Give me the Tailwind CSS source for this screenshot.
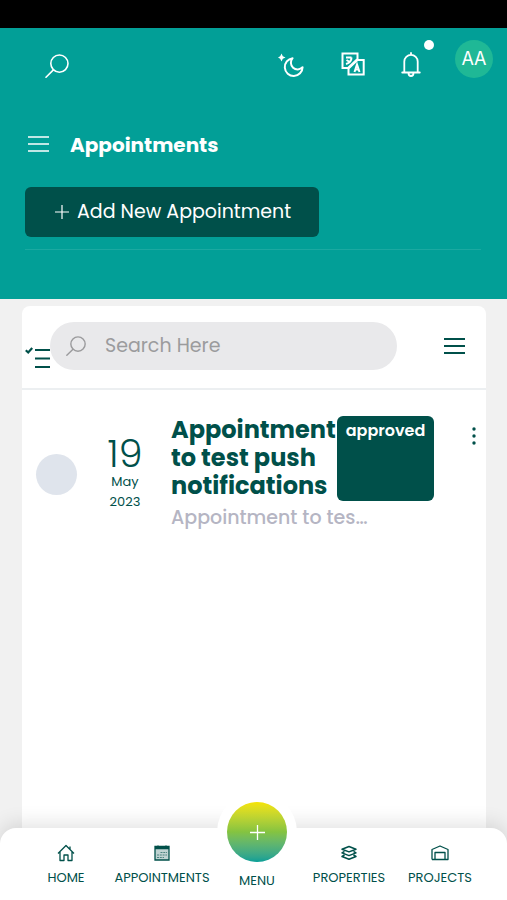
<!DOCTYPE html>
<html lang="en">
<head>
<meta charset="utf-8">
<meta name="viewport" content="width=device-width, initial-scale=1">
<title>Appointments</title>
<script src="https://cdn.jsdelivr.net/npm/@tailwindcss/browser@4"></script>
</head>
<body class="flex min-h-screen flex-col bg-[#f1f1f1] font-[Poppins,Inter,sans-serif] text-[#00504a]">
<div class="h-7 bg-black"></div>
<header class="h-[271px] bg-[#029f97] pl-[25px] pr-[14px] text-white">
  <div class="flex h-[90px] items-start justify-between pt-3">
    <button aria-label="Search" class="ml-5 mt-[14px]">
      <svg class="size-6" viewBox="0 0 24 24" fill="none" stroke="currentColor" stroke-width="1.6" stroke-linecap="round"><circle cx="14.4" cy="9.6" r="8.6"/><path d="M8.4 15.9 1 23.2"/></svg>
    </button>
    <div class="flex items-start">
      <button aria-label="Dark mode" class="mr-[37px] mt-3">
        <svg class="h-[26px] w-[26px]" viewBox="0 0 26 26" fill="none" stroke="currentColor" stroke-width="2" stroke-linejoin="round"><path d="M14.600 6.200A8.900 8.900 0 1 0 24.600 15.200 5.800 5.800 0 0 1 14.600 6.200Z"/><path d="M3.500 1.500 4.800 4.200 7.500 5.500 4.800 6.800 3.500 9.500 2.200 6.800 0 5.500 2.200 4.200Z" fill="currentColor" stroke="none"/></svg>
      </button>
      <button aria-label="Language" class="mr-[36px] mt-3">
        <svg class="size-6" viewBox="0 0 24 24" fill="none" stroke="currentColor" stroke-width="2"><path d="M7 16H1.500V1.500H16.500V7L7 16Z"/><path d="M7.500 16.500V22.500H22.700V8H16.500L7.500 16.500"/><path d="M5 5.500H10.500M5.500 8 9.500 10.500M10.500 5.500C10.500 8.500 8.500 11 5 12"/><path d="M13.500 20 16 12.500 18.500 20M14.500 17.500H18"/></svg>
      </button>
      <button aria-label="Notifications" class="relative mr-[34px] mt-3">
        <svg class="h-[26px] w-5" viewBox="0 0 20 26" fill="none" stroke="currentColor" stroke-width="1.8" stroke-linecap="round"><path d="M1.200 20.500H18.800M3.300 20V9.500A6.700 6.700 0 0 1 16.700 9.500V20M10 .9V2.500M7.500 21A2.500 3 0 0 0 12.500 21"/></svg>
        <span class="absolute -right-[13px] -top-3 size-[10px] rounded-full bg-white"></span>
      </button>
      <button class="size-[38px] rounded-full bg-[#1fb896] font-[Inter,sans-serif] text-lg font-normal">AA</button>
    </div>
  </div>
  <div class="flex h-[52px] items-center">
    <button aria-label="Open sidebar" class="ml-[3px] mr-[21px]">
      <svg class="h-[18px] w-[21px]" viewBox="0 0 21 18" fill="none" stroke="currentColor" stroke-width="1.600"><path d="M0 2H21M0 9H21M0 16H21"/></svg>
    </button>
    <h1 class="pt-[2px] text-xl font-bold">Appointments</h1>
  </div>
  <div class="mr-3 mt-[17px] border-b border-white/10 pb-3">
    <button class="flex h-[50px] items-center gap-2 rounded-md bg-[#00504a] pl-[30px] pr-7 text-[19px] whitespace-nowrap">
      <svg class="size-[14px]" viewBox="0 0 14 14" stroke="currentColor" stroke-width="1.200"><path d="M0 7H14M7 0V14"/></svg>
      Add New Appointment
    </button>
  </div>
</header>
<main class="ml-[22px] mr-[21px] mt-[7px] flex-1 rounded-t-lg bg-white">
  <div class="flex h-[84px] items-center border-b-2 border-[#eceff1] pb-[2px] pl-[3px] pr-[21px]">
    <button aria-label="Select items" class="mt-6">
      <svg class="h-6 w-[25px]" viewBox="0 0 25 24" fill="none" stroke="currentColor" stroke-width="2"><path d="M10 4H25M10 12.500H25M10 21H25"/><path d="M.8 4.200 3.200 6.500 7.200 2" stroke-width="2.200"/></svg>
    </button>
    <label class="mr-[47px] flex h-12 min-w-0 flex-1 items-center rounded-full bg-[#e9e9eb] px-4 text-[#9b9b9d]">
      <svg class="mr-[19px] size-5 shrink-0" viewBox="0 0 24 24" fill="none" stroke="currentColor" stroke-width="1.700" stroke-linecap="round"><circle cx="14.400" cy="9.600" r="8.600"/><path d="M8.400 15.900 1 23.200"/></svg>
      <input type="search" aria-label="Search" placeholder="Search Here" class="w-full min-w-0 bg-transparent pt-px text-[19px] outline-none placeholder:text-[#9b9b9d]">
    </label>
    <button aria-label="List options">
      <svg class="h-[18px] w-[21px]" viewBox="0 0 21 18" fill="none" stroke="currentColor" stroke-width="1.800"><path d="M0 2H21M0 9H21M0 16H21"/></svg>
    </button>
  </div>
  <article class="flex items-start pl-[14px] pr-[8px] pt-[26px]">
    <div class="mt-[38px] size-[41px] shrink-0 rounded-full bg-[#dfe4ec]"></div>
    <time datetime="2023-05-19" class="ml-6 mt-5 w-12 shrink-0 text-center text-[13px] leading-5">
      <span class="block text-[38px] font-light leading-9">19</span>May<br>2023
    </time>
    <div class="ml-[22px] w-[166px] shrink-0">
      <h2 class="text-2xl leading-7 font-bold">Appointment to test push notifications</h2>
      <p class="mt-1 w-[200px] whitespace-nowrap text-[19px] leading-7 font-medium text-[#b5b5c3]">Appointment to tes…</p>
    </div>
    <span class="h-[85px] w-[97px] shrink-0 rounded-md bg-[#00504a] pt-[5px] text-center text-base leading-5 font-semibold text-white">approved</span>
    <button aria-label="More actions" class="ml-auto mt-[11px]">
      <svg class="h-[18px] w-2" viewBox="0 0 8 18" fill="currentColor"><circle cx="4" cy="2" r="1.700"/><circle cx="4" cy="9" r="1.700"/><circle cx="4" cy="16" r="1.700"/></svg>
    </button>
  </article>
</main>
<nav class="sticky bottom-0 grid h-[72px] grid-cols-[86fr_106fr_84fr_100fr_82fr] rounded-t-2xl bg-white pl-[23px] pr-[26px] text-[13px] leading-5 shadow-[0_-4px_20px_rgba(0,0,0,0.12)]">
  <a href="#" class="flex flex-col items-center gap-[6px] pt-4">
    <svg class="size-[18px]" viewBox="0 0 18 18" fill="none" stroke="currentColor" stroke-width="1.300" stroke-linejoin="round"><path d="M1 9.500 9 1.500 17 9.500M3 8V16.500H7V11H11V16.500H15V8M13 2.500V5"/></svg>
    HOME</a>
  <a href="#" class="flex flex-col items-center gap-[6px] pt-4">
    <svg class="size-[18px]" viewBox="0 0 18 18" fill="none" stroke="currentColor" stroke-width="1.300"><path d="M2 2.500H16V16H2Z" fill="#00504a" fill-opacity=".25"/><path d="M2 4H16" stroke-width="2.500"/><path d="M5 1V4M13 1V4M7.500 8.500H14M4 11H14M4 13.500H11" stroke-width="1" stroke-opacity=".6" stroke-dasharray="2 .8"/></svg>
    APPOINTMENTS</a>
  <a href="#" class="relative flex flex-col items-center pt-[43px]">
    <span class="absolute -top-[36px] left-1/2 flex size-20 -translate-x-1/2 items-center justify-center rounded-full bg-white">
      <span class="flex size-[60px] items-center justify-center rounded-full bg-linear-to-b from-[#f5e400] via-[#84c340] to-[#029f97] text-white">
        <svg class="size-[15px]" viewBox="0 0 15 15" stroke="currentColor" stroke-width="1.300"><path d="M0 7.500H15M7.500 0V15"/></svg>
      </span>
    </span>
    <span class="relative">MENU</span></a>
  <a href="#" class="flex flex-col items-center gap-[6px] pt-4">
    <svg class="size-[18px]" viewBox="0 0 18 18" fill="none" stroke="currentColor" stroke-width="1.500" stroke-linejoin="round"><path d="M9 2.500 16 5.200 9 7.900 2 5.200ZM4.500 7.500 2 8.900 9 11.600 16 8.900 13.500 7.500M4.500 11 2 12.500 9 15.200 16 12.500 13.500 11"/></svg>
    PROPERTIES</a>
  <a href="#" class="flex flex-col items-center gap-[6px] pt-4">
    <svg class="size-[18px]" viewBox="0 0 18 18" fill="none" stroke="currentColor" stroke-width="1.300" stroke-linejoin="round"><path d="M1 15.500V5.500L9 2 17 5.500V15.500H14V8.500H4V15.500H1M4 8.500H14M4 15.500H14"/></svg>
    PROJECTS</a>
</nav>
</body>
</html>
